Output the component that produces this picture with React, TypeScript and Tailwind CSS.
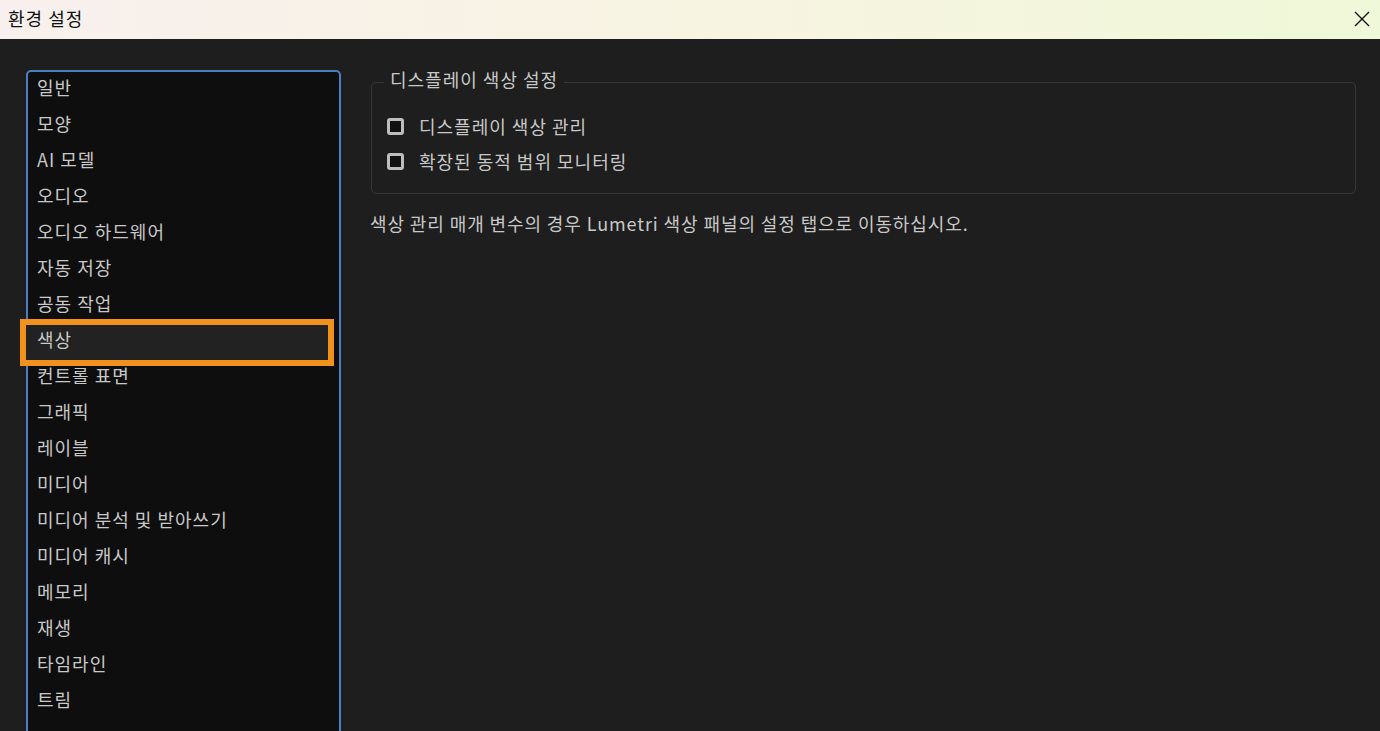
import React from "react";

const items = [
  "일반",
  "모양",
  "AI 모델",
  "오디오",
  "오디오 하드웨어",
  "자동 저장",
  "공동 작업",
  "색상",
  "컨트롤 표면",
  "그래픽",
  "레이블",
  "미디어",
  "미디어 분석 및 받아쓰기",
  "미디어 캐시",
  "메모리",
  "재생",
  "타임라인",
  "트림",
];

function Checkbox() {
  return (
    <span className="inline-block w-[17px] h-[17px] rounded-[3px] border-[3px] border-[#bdbdbd] bg-[#111111] shrink-0" />
  );
}

export default function App() {
  return (
    <div
      className="w-[1380px] h-[731px] overflow-hidden flex flex-col bg-[#1e1e1e] text-[#c8c8c8]"
      style={{ fontFamily: '"Noto Sans CJK KR", "Noto Sans", sans-serif' }}
    >
      <div className="h-[39px] shrink-0 flex items-center justify-between pl-[8px] pr-[10px] pb-[4px] bg-gradient-to-r from-[#f8f0ee] via-[#f8f4e2] to-[#eff8d8] text-[#111]">
        <span className="text-[18px] leading-none tracking-[1px]">환경 설정</span>
        <svg width="16" height="16" viewBox="0 0 16 16" className="mt-[2px]">
          <path d="M1 1 L15 15 M15 1 L1 15" stroke="#111" strokeWidth="1.4" fill="none" />
        </svg>
      </div>
      <div className="flex flex-1 min-h-0 pt-[31px] pl-[26px]">
        <div className="w-[315px] shrink-0 h-[700px] border-2 border-[#4a7fc4] rounded-[5px] bg-[#0e0e0e] pt-[1px]">
          {items.map((it, i) => (
            <div
              key={i}
              className="relative h-[36px] flex items-center pl-[9px] pb-[8px] text-[18px] leading-none tracking-[1px]"
            >
              {it === "색상" && (
                <div className="absolute left-[-8px] right-[5px] top-[-6px] bottom-[-5px] border-[6px] border-[#f0921c] bg-[#222222] pointer-events-none" />
              )}
              <span className="relative z-10">{it}</span>
            </div>
          ))}
        </div>
        <div className="flex-1 pl-[30px] pr-[24px] pt-[1px]">
          <div className="relative mt-[11px] border border-[#363636] rounded-[5px] h-[112px] pl-[15px] pt-[34px] flex flex-col gap-[17px]">
            <div className="absolute left-[12px] top-[-15px] px-[6px] bg-[#1e1e1e] text-[18px] leading-[22px] tracking-[1px]">
              디스플레이 색상 설정
            </div>
            <div className="flex items-center gap-[15px] text-[18px] leading-[18px] tracking-[1px]">
              <Checkbox />
              <span>디스플레이 색상 관리</span>
            </div>
            <div className="flex items-center gap-[15px] text-[18px] leading-[18px] tracking-[1px]">
              <Checkbox />
              <span>확장된 동적 범위 모니터링</span>
            </div>
          </div>
          <div className="mt-[18px] ml-[-1px] text-[18px] leading-[22px] tracking-[0.9px]">
            색상 관리 매개 변수의 경우 Lumetri 색상 패널의 설정 탭으로 이동하십시오.
          </div>
        </div>
      </div>
    </div>
  );
}
